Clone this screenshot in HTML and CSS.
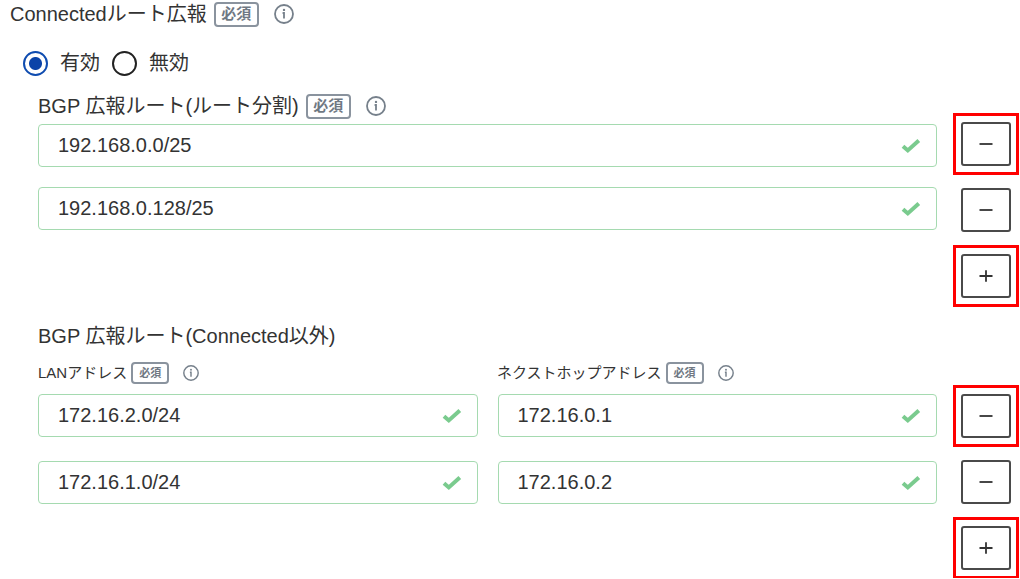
FILE: index.html
```html
<!DOCTYPE html>
<html lang="ja">
<head>
    <meta charset="UTF-8">
    <meta name="viewport" content="width=device-width, initial-scale=1.0">
    <title>Connectedルート広報</title>
    <link rel="stylesheet" href="styles.css">
</head>
<body>
    <!-- Shared icons -->
    <svg class="sprite" aria-hidden="true">
        <symbol id="info" viewBox="0 0 20 20">
            <circle cx="10" cy="10" r="9" fill="none" stroke="currentColor" stroke-width="1.8"/>
            <circle cx="10" cy="5.9" r="1.2" fill="currentColor"/>
            <path d="M8.6 9H10v5.600" fill="none" stroke="currentColor" stroke-width="1.8"/>
        </symbol>
        <symbol id="check" viewBox="0 0 20 16">
            <path d="M2 8.2l4.8 4.2L17.8 2.6" fill="none" stroke="currentColor" stroke-width="4"/>
        </symbol>
        <symbol id="minus" viewBox="0 0 14 14">
            <path d="M.5 7h13" stroke="currentColor" stroke-width="1.8"/>
        </symbol>
        <symbol id="plus" viewBox="0 0 14 14">
            <path d="M.5 7h13M7 1.2v11.6" stroke="currentColor" stroke-width="1.8"/>
        </symbol>
    </svg>

    <form class="form">
        <!-- Connected routes -->
        <div class="title">
            <span id="connected">Connectedルート広報</span>
            <span class="badge">必須</span>
            <svg class="info"><use href="#info"/></svg>
        </div>
        <div class="radios" role="radiogroup" aria-labelledby="connected">
            <label class="radio"><input type="radio" name="connected" checked>有効</label>
            <label class="radio"><input type="radio" name="connected">無効</label>
        </div>

        <!-- Split routes -->
        <section class="group">
            <div class="title">
                <label for="route1">BGP 広報ルート(ルート分割)</label>
                <span class="badge">必須</span>
                <svg class="info"><use href="#info"/></svg>
            </div>
            <div class="routes">
                <div class="fields">
                    <div class="field">
                        <input type="text" id="route1" value="192.168.0.0/25">
                        <svg class="check"><use href="#check"/></svg>
                    </div>
                    <div class="field">
                        <input type="text" aria-label="BGP 広報ルート 2" value="192.168.0.128/25">
                        <svg class="check"><use href="#check"/></svg>
                    </div>
                </div>
                <div class="actions">
                    <button type="button" class="marked" aria-label="削除"><svg><use href="#minus"/></svg></button>
                    <button type="button" aria-label="削除"><svg><use href="#minus"/></svg></button>
                    <button type="button" class="marked" aria-label="追加"><svg><use href="#plus"/></svg></button>
                </div>
            </div>
        </section>

        <!-- Other routes -->
        <section class="group others">
            <h2>BGP 広報ルート(Connected以外)</h2>
            <div class="columns">
                <div class="title small">
                    <label for="lan1">LANアドレス</label>
                    <span class="badge">必須</span>
                    <svg class="info"><use href="#info"/></svg>
                </div>
                <div class="title small">
                    <label for="hop1">ネクストホップアドレス</label>
                    <span class="badge">必須</span>
                    <svg class="info"><use href="#info"/></svg>
                </div>
            </div>
            <div class="routes">
                <div class="fields double">
                    <div class="field">
                        <input type="text" id="lan1" value="172.16.2.0/24">
                        <svg class="check"><use href="#check"/></svg>
                    </div>
                    <div class="field">
                        <input type="text" id="hop1" value="172.16.0.1">
                        <svg class="check"><use href="#check"/></svg>
                    </div>
                    <div class="field">
                        <input type="text" aria-label="LANアドレス 2" value="172.16.1.0/24">
                        <svg class="check"><use href="#check"/></svg>
                    </div>
                    <div class="field">
                        <input type="text" aria-label="ネクストホップアドレス 2" value="172.16.0.2">
                        <svg class="check"><use href="#check"/></svg>
                    </div>
                </div>
                <div class="actions">
                    <button type="button" class="marked" aria-label="削除"><svg><use href="#minus"/></svg></button>
                    <button type="button" aria-label="削除"><svg><use href="#minus"/></svg></button>
                    <button type="button" class="marked" aria-label="追加"><svg><use href="#plus"/></svg></button>
                </div>
            </div>
        </section>
    </form>
</body>
</html>
```

FILE: styles.css
```css
body {
    margin: 0;
    background: #fff;
    color: #333;
    font-family: "Liberation Sans", "Noto Sans CJK JP", sans-serif;
    font-size: 20px;
    line-height: 24px;
}
.sprite {
    display: none;
}
.form {
    padding: 1px 9px 8px 10px;
}

/* Titles */
.title {
    display: flex;
    align-items: center;
    height: 26px;
}
.badge {
    box-sizing: border-box;
    width: 45px;
    height: 25px;
    margin-left: 7px;
    border: 2px solid #8a939e;
    border-radius: 4px;
    color: #6f7883;
    font-size: 15px;
    font-weight: bold;
    line-height: 20px;
    text-align: center;
}
.info {
    width: 20px;
    height: 20px;
    margin-left: 15px;
    color: #76808b;
}
.small {
    font-size: 15px;
}
.small .badge {
    width: 38px;
    height: 22px;
    margin-left: 4px;
    font-size: 11px;
    line-height: 18px;
}
.small .info {
    width: 16px;
    height: 16px;
    margin-left: 14px;
}
h2 {
    margin: 0;
    font-size: 20px;
    font-weight: normal;
}

/* Radio buttons */
.radios {
    display: flex;
    gap: 12px;
    padding: 23px 13px 17px;
}
.radio {
    display: flex;
    align-items: center;
    gap: 12px;
    height: 26px;
}
.radio input {
    appearance: none;
    box-sizing: border-box;
    width: 25px;
    height: 25px;
    margin: 0;
    border: 2px solid #222;
    border-radius: 50%;
}
.radio input:checked {
    border-color: #0f4cb0;
    background: radial-gradient(circle, #0b43a8 6px, #fff 7px);
}

/* Route groups */
.group {
    padding-left: 28px;
}
.others {
    margin-top: 26px;
}
.columns {
    display: grid;
    grid-template-columns: 1fr 1fr;
    gap: 20px;
    margin: 12px 75px 7px 0;
}
.routes {
    display: flex;
    gap: 24px;
    padding-top: 3px;
}
.fields {
    flex: 1;
    display: grid;
    gap: 20px;
    align-content: start;
    padding-top: 2px;
}
.double {
    grid-template-columns: 1fr 1fr;
    gap: 24px 20px;
    padding-top: 0;
}
.others .routes {
    padding-top: 1px;
}
.field {
    display: flex;
    align-items: center;
    box-sizing: border-box;
    height: 43px;
    padding: 0 15px 0 19px;
    border: 1px solid #a5dab0;
    border-radius: 4px;
}
.field input {
    flex: 1;
    min-width: 0;
    padding: 0 0 2px;
    border: none;
    outline: none;
    background: none;
    color: #333;
    font: inherit;
}
.check {
    width: 20px;
    height: 16px;
    color: #7acb8e;
}

/* Add and remove buttons */
.actions {
    display: flex;
    flex-direction: column;
    gap: 22px;
}
button {
    position: relative;
    display: flex;
    align-items: center;
    justify-content: center;
    width: 50px;
    height: 44px;
    padding: 0;
    border: 2px solid #4a4a4a;
    border-radius: 3px;
    background: #fff;
    color: #333;
    cursor: pointer;
}
button svg {
    width: 14px;
    height: 14px;
}
.marked::after {
    content: "";
    position: absolute;
    inset: -11px -10px;
    border: 3px solid #f00;
}
```
